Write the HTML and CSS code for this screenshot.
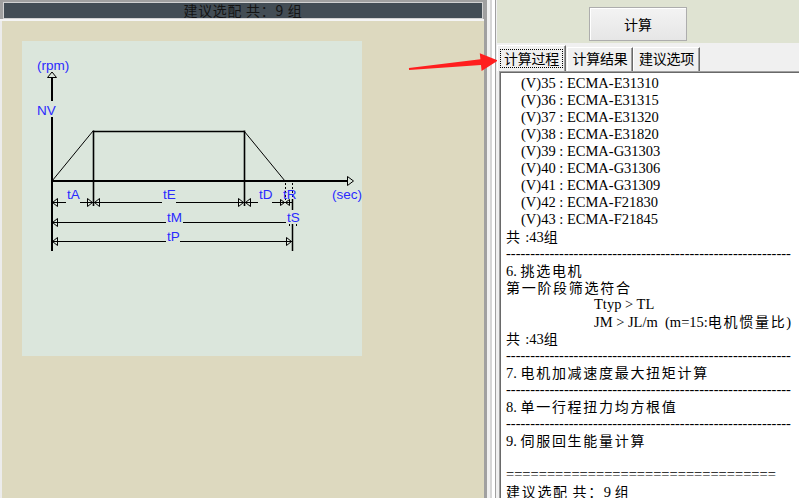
FILE: index.html
```html
<!DOCTYPE html>
<html lang="zh-CN">
<head>
<meta charset="utf-8">
<title>伺服选型计算</title>
<link rel="stylesheet" href="styles.css">
</head>
<body>
<div class="app">
  <section class="left">
    <div class="titlebar"><div class="titlebar-inner">建议选配 共：9 组</div></div>
    <div class="workspace">
      <div class="canvas">
        <svg class="diagram" width="340" height="315" viewBox="22 41 340 315" xmlns="http://www.w3.org/2000/svg">
          <g stroke="#000" fill="none">
            <line x1="52" y1="77" x2="52" y2="101" stroke-width="2" shape-rendering="crispEdges"/>
            <line x1="52" y1="117" x2="52" y2="251" stroke-width="2" shape-rendering="crispEdges"/>
            <polygon points="52,72 47.5,77.5 56.5,77.5" stroke-width="1"/>
            <line x1="51" y1="181" x2="348" y2="181" stroke-width="2" shape-rendering="crispEdges"/>
            <polygon points="353.5,181 347.5,176.5 347.5,185.5" stroke-width="1"/>
            <line x1="52" y1="181" x2="93" y2="131" stroke-width="1"/>
            <line x1="93" y1="131.5" x2="244" y2="131.5" stroke-width="1.6"/>
            <line x1="244" y1="131" x2="285" y2="181" stroke-width="1"/>
            <line x1="93.5" y1="130.5" x2="93.5" y2="206" stroke-width="1.6"/>
            <line x1="244.5" y1="130.5" x2="244.5" y2="206" stroke-width="1.6"/>
            <line x1="292.5" y1="199" x2="292.5" y2="251" stroke-width="1.5"/>
            <line x1="285.5" y1="183" x2="285.5" y2="200" stroke-width="1" stroke-dasharray="2 2"/>
            <line x1="292.5" y1="183" x2="292.5" y2="198" stroke-width="1" stroke-dasharray="2 2"/>

            <line x1="52" y1="202.5" x2="292" y2="202.5" stroke-width="1"/>
            <polygon points="52.5,202.5 57.5,198.5 57.5,206.5" stroke-width="1"/>
            <polygon points="92.5,202.5 87.5,198.5 87.5,206.5" stroke-width="1"/>
            <polygon points="94.5,202.5 99.5,198.5 99.5,206.5" stroke-width="1"/>
            <polygon points="243.5,202.5 238.5,198.5 238.5,206.5" stroke-width="1"/>
            <polygon points="245.5,202.5 250.5,198.5 250.5,206.5" stroke-width="1"/>
            <polygon points="284.5,202.5 280.5,199.5 280.5,205.5" stroke-width="1"/>
            <polygon points="285.5,202.5 289.5,199.5 289.5,205.5" stroke-width="1"/>

            <line x1="52" y1="222.5" x2="288" y2="222.5" stroke-width="1"/>
            <polygon points="52.5,222.5 57.5,218.5 57.5,226.5" stroke-width="1"/>
            <line x1="289.5" y1="212" x2="289.5" y2="227" stroke-width="1" stroke-dasharray="2 2"/>
            <line x1="296.5" y1="212" x2="296.5" y2="227" stroke-width="1" stroke-dasharray="2 2"/>

            <line x1="52" y1="241.5" x2="292" y2="241.5" stroke-width="1"/>
            <polygon points="52.5,241.5 57.5,237.5 57.5,245.5" stroke-width="1"/>
            <polygon points="291.5,241.5 286.5,237.5 286.5,245.5" stroke-width="1"/>
          </g>
          <g fill="#dbe6dc">
            <rect x="66" y="188" width="14" height="16"/>
            <rect x="162" y="188" width="14" height="16"/>
            <rect x="258" y="188" width="14" height="16"/>
            <rect x="166" y="210" width="17" height="14"/>
            <rect x="286" y="210" width="13" height="14"/>
            <rect x="166" y="229" width="14" height="14"/>
          </g>
          <g class="lbl">
            <text x="37" y="69.5">(rpm)</text>
            <text x="37" y="114.5">NV</text>
            <text x="67" y="198.5">tA</text>
            <text x="163" y="198.5">tE</text>
            <text x="259" y="198.5">tD</text>
            <text x="283" y="198.5">tR</text>
            <text x="332" y="199">(sec)</text>
            <text x="167" y="221.5">tM</text>
            <text x="287" y="221.5">tS</text>
            <text x="167" y="241">tP</text>
          </g>
        </svg>
      </div>
    </div>
  </section>
  <div class="splitter"></div>
  <section class="right">
    <div class="toolbar"><button class="calc" type="button">计算</button></div>
    <div class="tabs">
      <div class="tab tab-active"><span class="focus">计算过程</span></div>
      <div class="tab tab-2">计算结果</div>
      <div class="tab tab-3">建议选项</div>
    </div>
    <div class="output">
      <div class="line ind1">(V)35 : ECMA-E31310</div>
      <div class="line ind1">(V)36 : ECMA-E31315</div>
      <div class="line ind1">(V)37 : ECMA-E31320</div>
      <div class="line ind1">(V)38 : ECMA-E31820</div>
      <div class="line ind1">(V)39 : ECMA-G31303</div>
      <div class="line ind1">(V)40 : ECMA-G31306</div>
      <div class="line ind1">(V)41 : ECMA-G31309</div>
      <div class="line ind1">(V)42 : ECMA-F21830</div>
      <div class="line ind1">(V)43 : ECMA-F21845</div>
      <div class="line"><span class="zh">共</span> :43<span class="zh">组</span></div>
      <div class="line">-----------------------------------------------------------</div>
      <div class="line">6. <span class="zh">挑选电机</span></div>
      <div class="line"><span class="zh">第一阶段筛选符合</span></div>
      <div class="line ind2">Ttyp &gt; TL</div>
      <div class="line ind2">JM &gt; JL/m  (m=15:<span class="zh">电机惯量比</span>)</div>
      <div class="line"><span class="zh">共</span> :43<span class="zh">组</span></div>
      <div class="line">-----------------------------------------------------------</div>
      <div class="line">7. <span class="zh">电机加减速度最大扭矩计算</span></div>
      <div class="line">-----------------------------------------------------------</div>
      <div class="line">8. <span class="zh">单一行程扭力均方根值</span></div>
      <div class="line">-----------------------------------------------------------</div>
      <div class="line">9. <span class="zh">伺服回生能量计算</span></div>
      <div class="line"></div>
      <div class="line">=================================</div>
      <div class="line"><span class="zh">建议选配</span> <span class="zh">共：</span>9 <span class="zh">组</span></div>
    </div>
  </section>
</div>
<svg class="annotation" width="799" height="498" viewBox="0 0 799 498" xmlns="http://www.w3.org/2000/svg">
  <polygon points="408.9,68 480.4,59.2 479.8,53.2 498,60.5 481.6,71.1 481,65.1 409.1,70" fill="#ff1e1e"/>
</svg>
</body>
</html>
```

FILE: styles.css
```css
* {
  box-sizing: border-box;
}

html,
body {
  margin: 0;
  padding: 0;
}

body {
  width: 799px;
  height: 498px;
  overflow: hidden;
  position: relative;
  background: #f0f0f0;
  font-family: "Noto Sans CJK SC", sans-serif;
}

.app {
  display: flex;
  width: 799px;
  height: 498px;
}

.left {
  width: 484px;
  display: flex;
  flex-direction: column;
  background: #ddd9bf;
}

.titlebar {
  height: 21px;
  background: #a0a0a0;
  padding: 2px 1px 0 3px;
  border-bottom: 2px solid #f4f4f4;
}

.titlebar-inner {
  height: 17px;
  border: 1px solid #d2d2d2;
  background: #434d55;
  color: #141414;
  font-size: 14px;
  line-height: 15px;
  letter-spacing: 0.7px;
  text-align: center;
  overflow: hidden;
  white-space: nowrap;
}

.workspace {
  flex: 1;
  padding: 20px 0 0 20px;
  border-left: 2px solid #ececec;
}

.canvas {
  width: 340px;
  height: 315px;
  background: #dbe6dc;
}

.diagram {
  display: block;
}

.lbl text {
  font-family: "Liberation Sans", Arial, sans-serif;
  font-size: 13.5px;
  fill: #2a2aff;
}

.splitter {
  width: 13px;
  background: linear-gradient(to right,
    #a0a0a0 0 3px,
    #f0f0f0 3px 6px,
    #d6d6d6 6px 8px,
    #ffffff 8px 11px,
    #a0a0a0 11px 12px,
    #f0f0f0 12px 13px);
}

.right {
  flex: 1;
  min-width: 0;
  display: flex;
  flex-direction: column;
}

.toolbar {
  height: 43px;
  background: #dfe3d2;
  padding: 7px 0 0 92px;
}

.calc {
  display: block;
  width: 98px;
  height: 34px;
  margin: 0;
  padding: 0;
  border: 1px solid #adadad;
  border-radius: 0;
  background: linear-gradient(#f3f3f3, #e6e6e6);
  box-shadow: inset 1px 1px #ffffff;
  color: #000;
  font-family: "Noto Sans CJK SC", sans-serif;
  font-size: 14px;
  line-height: 32px;
}

.tabs {
  height: 28px;
  background: #f0f0f0;
  display: flex;
  align-items: flex-end;
}

.tab {
  height: 24px;
  border-top: 1px solid #ffffff;
  border-left: 1px solid #ffffff;
  border-right: 1px solid #696969;
  box-shadow: inset -1px 0 #a0a0a0;
  font-size: 14px;
  letter-spacing: -0.25px;
  line-height: 21px;
  text-align: center;
  color: #000;
  white-space: nowrap;
}

.tab-active {
  width: 69px;
  height: 26px;
  padding-top: 2px;
  position: relative;
  z-index: 1;
}

.focus {
  display: inline-block;
  width: 63px;
  height: 19px;
  line-height: 17px;
  border: 1px dotted #000;
}

.tab-2 {
  width: 66px;
  margin-left: 1px;
}

.tab-3 {
  width: 67px;
}

.output {
  flex: 1;
  margin-left: 2px;
  background: #ffffff;
  border-left: 1px solid #a0a0a0;
  border-top: 1px solid #a0a0a0;
  box-shadow: inset 1px 1px #696969;
  padding: 3px 0 0 6px;
  font-family: "Liberation Serif", "Noto Sans CJK SC", serif;
  font-size: 14.5px;
  color: #000;
  overflow: hidden;
}

.line {
  height: 17px;
  line-height: 17px;
  white-space: pre;
}

.ind1 {
  padding-left: 15px;
}

.ind2 {
  padding-left: 88px;
}

.zh {
  font-family: "Noto Sans CJK SC", sans-serif;
  font-size: 14px;
  letter-spacing: 1.7px;
}

.annotation {
  position: absolute;
  left: 0;
  top: 0;
  pointer-events: none;
}
```
